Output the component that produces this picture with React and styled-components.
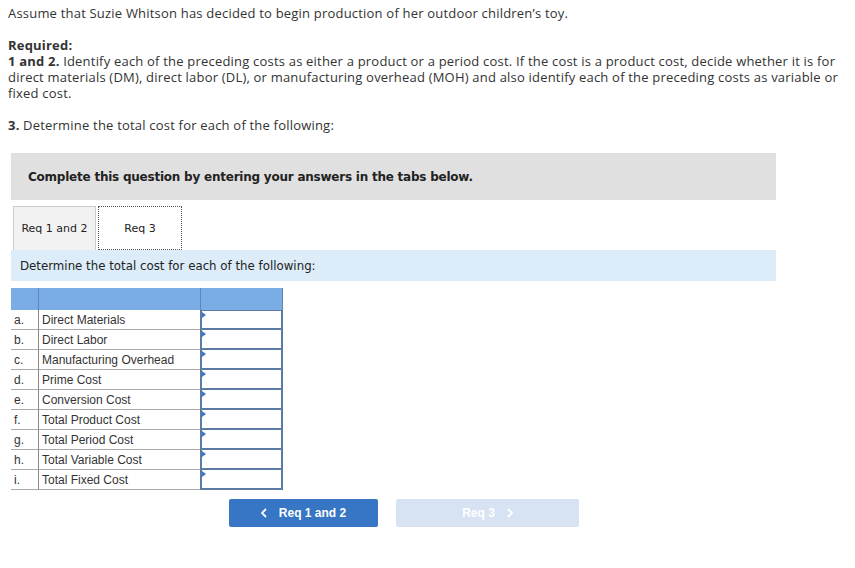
import React from "react";
import styled, { createGlobalStyle } from "styled-components";

const Global = createGlobalStyle`
  html, body { margin: 0; padding: 0; background: #fff; }
  body { width: 855px; height: 568px; overflow: hidden; }
`;

const Page = styled.div`
  padding: 5px 8px 0 8px;
  font-family: "Open Sans", Lato, sans-serif;
  font-size: 13px;
  letter-spacing: 0.2px;
  color: #333;
`;

const Para = styled.p`
  margin: 0 0 ${(p) => p.$mb || 0}px 0;
  line-height: 16px;
  white-space: nowrap;
`;

const Bold = styled.span`
  font-weight: 700;
`;

const Work = styled.div`
  margin: 20px 0 0 3px;
  width: 765px;
  letter-spacing: normal;
  font-family: "DejaVu Sans", Verdana, sans-serif;
`;

const Banner = styled.div`
  height: 47px;
  background: #e0e0e0;
  display: flex;
  align-items: center;
  padding-left: 17px;
  font-size: 12px;
  font-weight: 700;
  color: #222;
  letter-spacing: -0.23px;
`;

const Tabs = styled.div`
  display: flex;
  gap: 2px;
  margin: 6px 0 0 2px;
  height: 44px;
`;

const Tab = styled.div`
  width: ${(p) => p.$w}px;
  box-sizing: border-box;
  display: flex;
  align-items: center;
  justify-content: center;
  font-size: 11px;
  color: #222;
  background: ${(p) => (p.$active ? "#fff" : "#f2f2f2")};
  border: ${(p) => (p.$active ? "1px dotted #555" : "1px solid #ccc")};
  border-bottom: ${(p) => (p.$active ? "1px dotted #555" : "none")};
`;

const Prompt = styled.div`
  height: 31px;
  background: #dcecf8;
  display: flex;
  align-items: center;
  padding-left: 9px;
  font-size: 11.8px;
  color: #222;
`;

const Table = styled.div`
  margin-top: 7px;
  display: grid;
  grid-template-columns: 27px 162px 83px;
  width: 272px;
  font-family: "Liberation Sans", Arial, sans-serif;
  font-size: 12px;
  color: #333;
`;

const Head = styled.div`
  height: 22px;
  background: #7aade5;
  border-left: ${(p) => (p.$sep ? "1px solid #5f86b3" : "none")};
  border-right: ${(p) => (p.$last ? "1px solid #5f86b3" : "none")};
  box-sizing: border-box;
`;

const Letter = styled.div`
  height: 20px;
  box-sizing: border-box;
  border-bottom: 1px solid #a9a9a9;
  display: flex;
  align-items: center;
  padding-left: 3px;
`;

const Label = styled.div`
  height: 20px;
  box-sizing: border-box;
  border-bottom: 1px solid #a9a9a9;
  border-left: 1px solid #888;
  display: flex;
  align-items: center;
  padding-left: 3px;
`;

const InputCell = styled.div`
  position: relative;
  height: 20px;
  box-sizing: border-box;
  border: 2px solid #5c7ba3;
  border-top-width: ${(p) => (p.$first ? 1 : 0)}px;
  background: #fff;
  &::before {
    content: "";
    position: absolute;
    left: 0;
    top: 1px;
    border-top: 3px solid transparent;
    border-bottom: 3px solid transparent;
    border-left: 4px solid #3d78c9;
  }
`;

const Nav = styled.div`
  display: flex;
  gap: 18px;
  margin: 9px 0 0 221px;
  font-family: "Liberation Sans", Arial, sans-serif;
  letter-spacing: normal;
`;

const NavButton = styled.div`
  width: ${(p) => p.$w}px;
  height: 28px;
  border-radius: 2px;
  background: ${(p) => (p.$disabled ? "#d7e3f2" : "#3676c4")};
  color: #fff;
  display: flex;
  align-items: center;
  justify-content: center;
  gap: 12px;
  font-size: 12px;
  font-weight: 700;
`;

const Chevron = ({ dir }) => (
  <svg width="6" height="10" viewBox="0 0 6 10">
    <path
      d={dir === "left" ? "M5 1 L1 5 L5 9" : "M1 1 L5 5 L1 9"}
      fill="none"
      stroke="#fff"
      strokeWidth="1.8"
    />
  </svg>
);

const rows = [
  ["a.", "Direct Materials"],
  ["b.", "Direct Labor"],
  ["c.", "Manufacturing Overhead"],
  ["d.", "Prime Cost"],
  ["e.", "Conversion Cost"],
  ["f.", "Total Product Cost"],
  ["g.", "Total Period Cost"],
  ["h.", "Total Variable Cost"],
  ["i.", "Total Fixed Cost"],
];

export default function App() {
  return (
    <>
      <Global />
      <Page>
        <Para $mb={16}>
          Assume that Suzie Whitson has decided to begin production of her outdoor children’s toy.
        </Para>
        <Para>
          <Bold>Required:</Bold>
        </Para>
        <Para $mb={16}>
          <Bold>1 and 2.</Bold> Identify each of the preceding costs as either a product or a period
          cost. If the cost is a product cost, decide whether it is for
          <br />
          direct materials (DM), direct labor (DL), or manufacturing overhead (MOH) and also identify
          each of the preceding costs as variable or
          <br />
          fixed cost.
        </Para>
        <Para>
          <Bold>3.</Bold> Determine the total cost for each of the following:
        </Para>
        <Work>
          <Banner>Complete this question by entering your answers in the tabs below.</Banner>
          <Tabs>
            <Tab $w={83}>Req 1 and 2</Tab>
            <Tab $w={84} $active>
              Req 3
            </Tab>
          </Tabs>
          <Prompt>Determine the total cost for each of the following:</Prompt>
          <Table>
            <Head />
            <Head $sep />
            <Head $sep $last />
            {rows.map(([l, t], i) => (
              <React.Fragment key={l}>
                <Letter>{l}</Letter>
                <Label>{t}</Label>
                <InputCell $first={i === 0} />
              </React.Fragment>
            ))}
          </Table>
        </Work>
        <Nav>
          <NavButton $w={149}>
            <Chevron dir="left" />
            <span>Req 1 and 2</span>
          </NavButton>
          <NavButton $w={183} $disabled>
            <span>Req 3</span>
            <Chevron dir="right" />
          </NavButton>
        </Nav>
      </Page>
    </>
  );
}
